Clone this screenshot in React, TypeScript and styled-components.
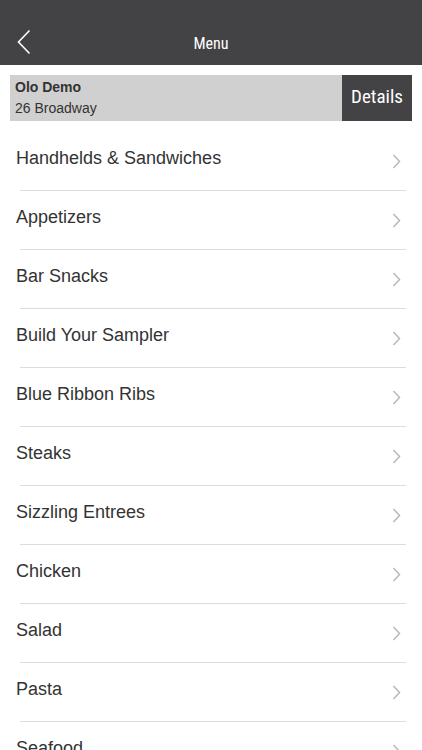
import React from 'react';
import styled, { createGlobalStyle } from 'styled-components';

const categories: string[] = [
  'Handhelds & Sandwiches',
  'Appetizers',
  'Bar Snacks',
  'Build Your Sampler',
  'Blue Ribbon Ribs',
  'Steaks',
  'Sizzling Entrees',
  'Chicken',
  'Salad',
  'Pasta',
  'Seafood',
];

const GlobalStyle = createGlobalStyle`
  html, body {
    margin: 0;
    padding: 0;
    background: #fff;
    font-family: 'Liberation Sans', Arial, sans-serif;
  }
`;

const App: React.FC = () => {
  return (
    <>
      <GlobalStyle />
      <Page>
        <Header>
          <BackButton aria-label='Back'>
            <svg width='16' height='26' viewBox='0 0 16 26'>
              <path
                d='M13.5 1.5 L2.5 13 L13.5 24.5'
                fill='none'
                stroke='#fff'
                strokeWidth='1.6'
              />
            </svg>
          </BackButton>
          <HeaderTitle>Menu</HeaderTitle>
        </Header>

        <StoreBar>
          <StoreInfo>
            <StoreName>Olo Demo</StoreName>
            <StoreAddress>26 Broadway</StoreAddress>
          </StoreInfo>
          <DetailsButton>Details</DetailsButton>
        </StoreBar>

        <List>
          {categories.map((c) => (
            <Row key={c}>
              <RowLabel>{c}</RowLabel>
              <svg width='9' height='15' viewBox='0 0 9 15'>
                <path
                  d='M1.5 1 L7.5 7.5 L1.5 14'
                  fill='none'
                  stroke='#b8b8b8'
                  strokeWidth='1.5'
                />
              </svg>
            </Row>
          ))}
        </List>
      </Page>
    </>
  );
};

export default App;

const Page = styled.div`
  width: 422px;
  height: 750px;
  overflow: hidden;
  background: #fff;
`;

const Header = styled.header`
  height: 65px;
  background: #434345;
  display: flex;
  align-items: flex-end;
  justify-content: center;
  position: relative;
  padding-bottom: 11px;
  box-sizing: border-box;
`;

const BackButton = styled.button`
  position: absolute;
  left: 16px;
  top: 29px;
  padding: 0;
  border: 0;
  background: none;
  display: flex;
`;

const HeaderTitle = styled.h1`
  margin: 0;
  color: #fff;
  font-family: 'Liberation Sans Narrow', 'Roboto Condensed', 'Liberation Sans', sans-serif;
  font-weight: normal;
  font-size: 16px;
  line-height: 20px;
`;

const StoreBar = styled.div`
  margin: 10px 10px 0;
  height: 46px;
  display: flex;
  background: #d0d0d0;
`;

const StoreInfo = styled.div`
  flex: 1;
  padding: 3px 0 0 5px;
  display: flex;
  flex-direction: column;
  gap: 3px;
  color: #333;
  font-size: 14px;
  line-height: 18px;
`;

const StoreName = styled.div`
  font-weight: bold;
`;

const StoreAddress = styled.div``;

const DetailsButton = styled.button`
  width: 70px;
  border: 0;
  padding: 0 0 4px;
  background: #434345;
  color: #fff;
  font-family: 'Liberation Sans Narrow', 'Roboto Condensed', 'Liberation Sans', sans-serif;
  font-weight: normal;
  font-size: 19px;
`;

const List = styled.ul`
  list-style: none;
  margin: 11px 0 0;
  padding: 0;
`;

const Row = styled.li`
  height: 58px;
  margin: 0 16px 0 20px;
  padding-right: 5px;
  display: flex;
  align-items: center;
  justify-content: space-between;
  border-bottom: 1px solid #dcdcdc;
`;

const RowLabel = styled.span`
  margin-left: -4px;
  margin-top: -5px;
  font-size: 18px;
  color: #333;
`;
